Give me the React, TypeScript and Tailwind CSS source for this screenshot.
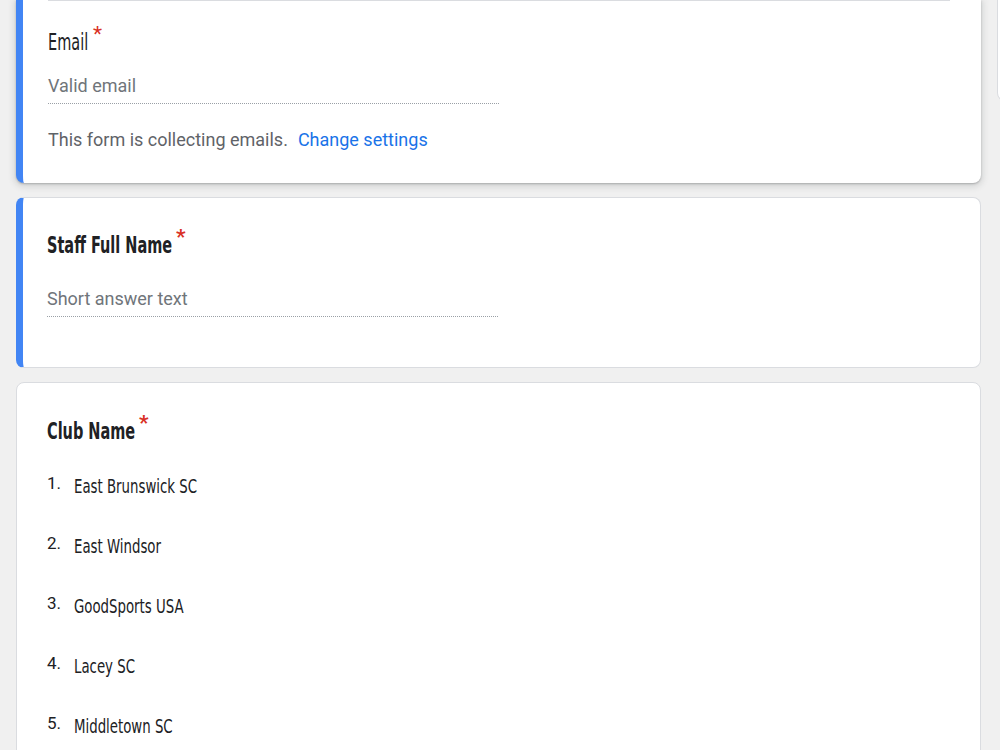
import React from 'react';

const cond = "font-['DejaVu_Sans_Condensed','DejaVu_Sans',sans-serif]";
const roboto = "font-['Roboto','Liberation_Sans',sans-serif]";

const clubs = [
  { name: 'East Brunswick SC', w: 'w-[123px]' },
  { name: 'East Windsor', w: 'w-[86px]' },
  { name: 'GoodSports USA', w: 'w-[108px]' },
  { name: 'Lacey SC', w: 'w-[59px]' },
  { name: 'Middletown SC', w: 'w-[98px]' },
];

// narrow heading text: the installed condensed face is wider than the design's, so squeeze it
function Narrow({ text, w, scale = 'scale-x-[0.7]' }: { text: string; w: string; scale?: string }) {
  return (
    <span className={`inline-block ${w} whitespace-nowrap`}>
      <span className={`inline-block origin-left ${scale}`}>{text}</span>
    </span>
  );
}

function Star() {
  return <span className={`${roboto} text-[#d93025] text-[21px] ml-[6px] relative -top-[8px]`}>*</span>;
}

export default function App() {
  return (
    <div className="w-[1000px] h-[750px] overflow-hidden bg-[#f0f0f0] flex">
      <div className="w-[965px] shrink-0 ml-[16px] flex flex-col gap-[14px]">
        {/* email question, selected */}
        <div className="shrink-0 bg-white rounded-b-[8px] border-l-[7px] border-[#4285f4] shadow-[0_1px_2px_rgba(60,64,67,0.3),0_2px_6px_2px_rgba(60,64,67,0.15)] h-[183px] pl-[25px] pr-[31px]">
          <div className="border-t border-[#dadce0]" />
          <div className={`${cond} text-[23px] text-[#202124] mt-[26px] leading-[30px] flex items-start`}>
            <Narrow text="Email" w="w-[39px]" />
            <Star />
          </div>
          <div className={`${roboto} w-[451px] mt-[17px] text-[18px] leading-[24px] text-[#70757a] pb-[5px] border-b border-dotted border-[#9aa0a6]`}>
            Valid email
          </div>
          <div className={`${roboto} mt-[24px] text-[18px] leading-[24px] text-[#5f6368]`}>
            This form is collecting emails.<span className="ml-[10px] text-[#1a73e8]">Change settings</span>
          </div>
        </div>

        {/* staff full name */}
        <div className="shrink-0 bg-white rounded-[8px] border border-[#dadce0] border-l-[7px] border-l-[#4285f4] h-[171px] pl-[24px] pr-[31px] pt-[32px]">
          <div className={`${cond} font-bold text-[23px] text-[#202124] leading-[30px] flex items-start`}>
            <Narrow text="Staff Full Name" w="w-[123px]" />
            <Star />
          </div>
          <div className={`${roboto} w-[451px] mt-[27px] text-[18px] leading-[24px] text-[#70757a] pb-[5px] border-b border-dotted border-[#9aa0a6]`}>
            Short answer text
          </div>
        </div>

        {/* club name */}
        <div className="shrink-0 bg-white rounded-t-[8px] border border-[#dadce0] pl-[30px] pr-[31px] pt-[33px] pb-[40px]">
          <div className={`${cond} font-bold text-[23px] text-[#202124] leading-[30px] flex items-start`}>
            <Narrow text="Club Name" w="w-[86px]" />
            <Star />
          </div>
          <ol className="mt-[28px] flex flex-col gap-[36px]">
            {clubs.map((c, i) => (
              <li key={c.name} className="flex items-center h-[24px]">
                <span className={`${roboto} w-[27px] text-[17px] text-[#202124] -mt-[4px]`}>{i + 1}.</span>
                <span className={`${cond} text-[20px] text-[#202124]`}>
                  <Narrow text={c.name} w={c.w} scale="scale-x-[0.74]" />
                </span>
              </li>
            ))}
          </ol>
        </div>
      </div>
      <div className="shrink-0 ml-[16px] w-[40px] h-[101px] bg-white border border-[#dadce0] rounded-bl-[8px] border-t-0" />
    </div>
  );
}
